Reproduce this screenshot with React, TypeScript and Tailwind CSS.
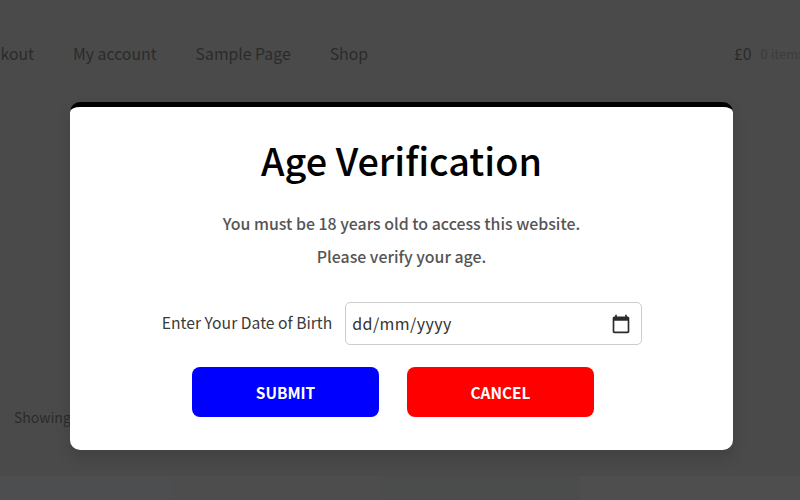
export default function App() {
  return (
    <div
      className="relative w-[800px] h-[500px] overflow-hidden bg-[#4a4a4a] flex flex-col"
      style={{ fontFamily: '"Noto Sans CJK JP", "Noto Sans", sans-serif' }}
    >
      {/* Page behind the overlay */}
      <header className="flex items-center justify-between h-[24px] mt-[42px] text-[15.8px] text-[#2a2a2a] whitespace-nowrap">
        <nav className="flex gap-[39px] -ml-[36px]">
          <span>Checkout</span>
          <span>My account</span>
          <span>Sample Page</span>
          <span>Shop</span>
        </nav>
        <div className="flex items-center gap-[9px] w-[66px] shrink-0">
          <span>£0</span>
          <span className="text-[13px] text-[#3c3c3c]">0 items</span>
        </div>
      </header>
      <p className="mt-[339px] ml-[14px] h-[24px] text-[14px] leading-[24px] text-[#2a2a2a]">Showing all results</p>
      <div className="mt-[47px] flex-1 grid grid-cols-[172px_207px_1fr_220px] gap-0">
        <div className="bg-[#4c4e50]" />
        <div className="bg-[#4d4d4d]" />
        <div className="bg-[#4b4d4c]" />
        <div className="bg-[#4e4e4e]" />
      </div>

      {/* Age gate */}
      <div className="absolute left-[70px] top-[102px] w-[663px] h-[348px] bg-white rounded-[10px] border-t-[5px] border-black shadow-[0_8px_16px_rgba(0,0,0,0.12)] flex flex-col items-center">
        <h1 className="mt-[25px] h-[56px] text-[37.8px] leading-[56px] font-medium text-black">Age Verification</h1>
        <p className="mt-[24px] h-[24px] text-[15.9px] leading-[24px] font-medium text-[#555555]">
          You must be 18 years old to access this website.
        </p>
        <p className="mt-[9px] h-[24px] text-[15.9px] leading-[24px] font-medium text-[#555555]">Please verify your age.</p>
        <div className="mt-[33px] ml-[1px] flex items-center gap-[13px]">
          <label className="pb-[2px] text-[15.7px] text-[#3a3a3a]">Enter Your Date of Birth</label>
          <div className="w-[297px] h-[43px] bg-white rounded-[5px] border border-[#cccccc] flex items-center justify-between pl-[6px] pr-[10px]">
            <span className="pb-[2px] text-[16px] text-[#333333] tracking-[0.4px]">dd/mm/yyyy</span>
            <svg width="20" height="20" viewBox="0 0 24 24" fill="#2b2b2b">
              <path d="M20 3h-1V1h-2v2H7V1H5v2H4c-1.1 0-2 .9-2 2v16c0 1.1.9 2 2 2h16c1.1 0 2-.9 2-2V5c0-1.1-.9-2-2-2zm0 18H4V8h16v13z" />
            </svg>
          </div>
        </div>
        <div className="mt-[22px] mr-[17px] flex gap-[28px]">
          <button className="w-[187px] h-[50px] rounded-[8px] bg-[#0000ff] pt-[2px] text-white text-[15.4px] font-bold">SUBMIT</button>
          <button className="w-[187px] h-[50px] rounded-[8px] bg-[#ff0000] pt-[2px] text-white text-[15.4px] font-bold">CANCEL</button>
        </div>
      </div>
    </div>
  )
}
